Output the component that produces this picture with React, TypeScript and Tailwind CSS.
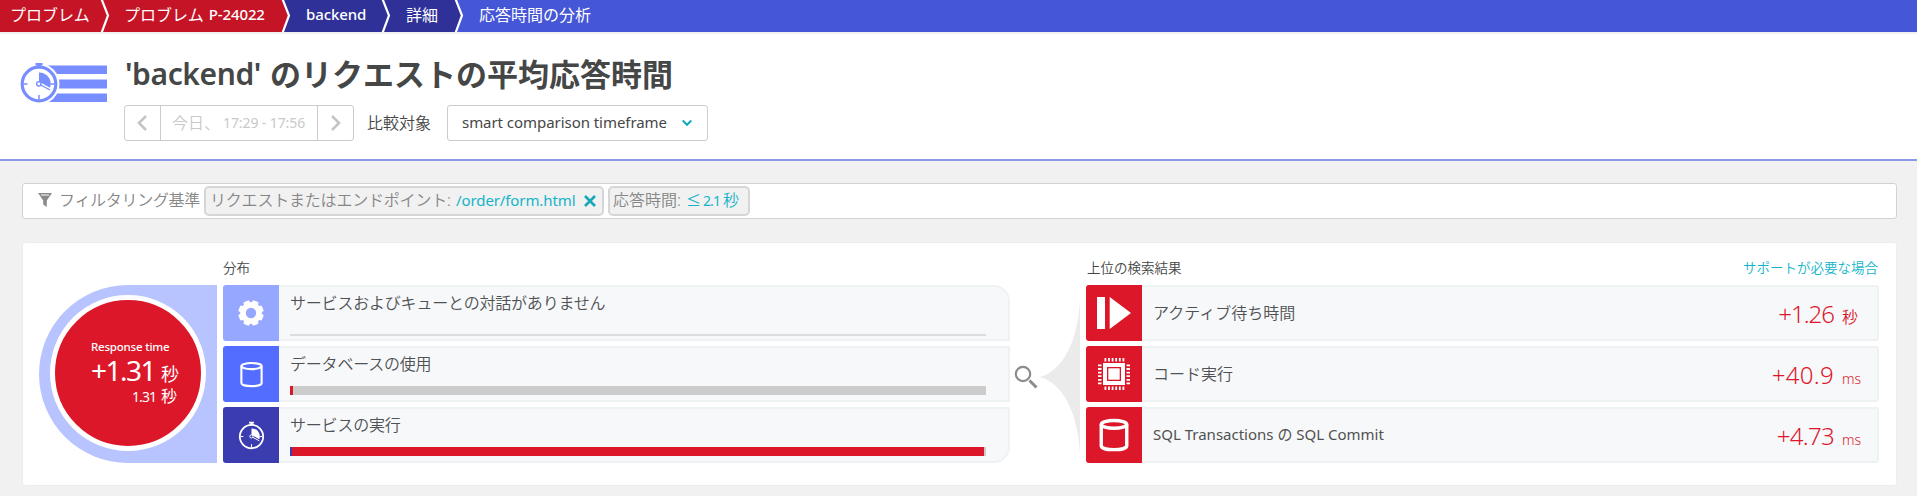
import React from "react";

const T = ({ t, c }: { t: string; c: string }) => <span className={`whitespace-pre leading-none ${c}`}>{t}</span>;

function Stopwatch({ color, hub, thin }: { color: string; hub: string; thin?: boolean }) {
  return (
    <>
      <circle cx="20" cy="22" r={thin ? 16.5 : 16.8} fill="none" stroke={color} strokeWidth={thin ? 2.6 : 3.2} />
      <path d="M16.5 1h7v2.500h-1.800V6h-3.400V3.500h-1.800z" fill={color} />
      <path d="M20 10.500a11.500 11.500 0 0 1 11 15.500L20 21z" fill={color} />
      <path d="M20.500 21.500l11 6.300" stroke={hub} strokeWidth="2.800" />
      <path d="M20 22l11 6" stroke={color} strokeWidth="1.400" />
      <circle cx="19.800" cy="21.800" r="2.200" fill={hub} stroke={color} strokeWidth="1.400" />
      <path d="M20 33v4M5 22h3.500M31.500 22H35" stroke={color} strokeWidth="1.500" />
    </>
  );
}

function HeaderIcon() {
  return (
    <svg width="88" height="42" viewBox="0 0 88 42">
      <path d="M20 3.500h67v8.500H20zM20 17.500h67v9H20zM20 31.500h67v8.500H20z" fill="#788dff" />
      <circle cx="19" cy="22" r="20.500" fill="#fff" />
      <g transform="translate(-1 0)">
        <Stopwatch color="#788dff" hub="#fff" />
      </g>
    </svg>
  );
}

function Crumb({ w, bg, next, children }: { w: string; bg: string; next?: string; children: React.ReactNode }) {
  return (
    <div className={`flex h-8 items-center ${w} ${bg}`}>
      <div className="flex flex-1 items-center pb-[3px]">{children}</div>
      {next && (
        <svg width="11" height="32" viewBox="0 0 11 32" className="shrink-0">
          <path d="M3 0l6 16-6 16h8V0z" fill={next} />
          <path d="M2.500 -1l6.500 16.500L2.500 33" fill="none" stroke="#fff" strokeWidth="2.200" />
        </svg>
      )}
    </div>
  );
}

function DbIcon({ size, sw }: { size: number; sw: number }) {
  return (
    <svg width={size} height={size} viewBox="0 0 32 32" fill="none" stroke="#fff" strokeWidth={sw}>
      <ellipse cx="16" cy="6" rx="12" ry="3.600" />
      <path d="M4 6v20c0 2.300 5.400 3.800 12 3.800s12-1.500 12-3.800V6" />
    </svg>
  );
}

function GearIcon() {
  return (
    <svg width="26" height="26" viewBox="-13 -13 26 26">
      {[0, 45, 90, 135, 180, 225, 270, 315].map((a) => (
        <path key={a} d="M-3.600 -8L-3 -12.500Q0 -13 3 -12.500L3.600 -8z" transform={`rotate(${a + 22.5})`} fill="#fff" />
      ))}
      <circle r="8" fill="none" stroke="#fff" strokeWidth="5.600" />
    </svg>
  );
}

function ChipIcon() {
  const p = [6.5, 10.1, 13.7, 17.3, 20.9, 24.5];
  return (
    <svg width="32" height="32" viewBox="0 0 32 32" fill="#fff">
      <path fillRule="evenodd" d="M5 5h22v22H5zM9 9v14h14V9z" />
      <path d="M10.300 10.300h11.400v11.400H10.300z" />
      {p.map((v) => (
        <g key={v}>
          <path d={`M${v} 0h1.800v3.500h-1.800zM${v} 28.500h1.800V32h-1.800z`} />
          <path d={`M0 ${v}v1.800h3.500v-1.800zM28.500 ${v}v1.800H32v-1.800z`} />
        </g>
      ))}
    </svg>
  );
}

function PlayIcon() {
  return (
    <svg width="34" height="32" viewBox="0 0 34 32" fill="#fff">
      <path d="M0 0h8v32H0zM12.700 0L34 16 12.700 32z" />
    </svg>
  );
}

function DistRow({ icon, bg, r, label, bar }: { icon: React.ReactNode; bg: string; r: string; label: string; bar: React.ReactNode }) {
  return (
    <div className="flex h-14">
      <div className={`flex w-14 items-center justify-center rounded-l-[3px] ${bg}`}>{icon}</div>
      <div className={`flex w-[731px] flex-col justify-between border-2 border-l-0 border-[#eff2f3] bg-[#f7f8fa] pr-[22px] pl-[11px] ${r}`}>
        <T t={label} c="pt-[8px] text-[16px] font-[350] tracking-[-0.2px] text-[#505151]" />
        {bar}
      </div>
    </div>
  );
}

function FindRow({ icon, children, value, vc, unit, uw }: { icon: React.ReactNode; children: React.ReactNode; value: string; vc: string; unit: string; uw: string }) {
  return (
    <div className="flex h-14">
      <div className="flex w-14 items-center justify-center rounded-l-[3px] bg-[#dc172a]">{icon}</div>
      <div className="flex flex-1 items-center justify-between rounded-r-[3px] border-2 border-l-0 border-[#eff2f3] bg-[#f7f8fa] pl-[11px]">
        <div className="flex items-baseline pb-px text-[16px] font-[350] text-[#505151]">{children}</div>
        <div className="flex items-baseline pt-1 text-[#dc172a]">
          <T t={value} c={`text-[24px] font-light ${vc}`} />
          <div className="w-[43px] pl-2">
            <T t={unit} c={uw} />
          </div>
        </div>
      </div>
    </div>
  );
}

export default function App() {
  return (
    <div className="flex h-[496px] w-[1917px] flex-col overflow-hidden bg-[#f1f1f1] font-['Noto_Sans','Noto_Sans_CJK_JP',sans-serif] text-[#454646]">
      <nav className="flex h-8 shrink-0 bg-[#4556d7] text-white shadow-[inset_0_1px_0_rgba(0,0,0,0.15)]">
        <Crumb w="w-[110px] pl-[10px]" bg="bg-[#c41425]" next="#c41425">
          <T t="プロブレム" c="text-[16px]" />
        </Crumb>
        <Crumb w="w-[181px] pl-[14px]" bg="bg-[#c41425]" next="#2f3199">
          <T t="プロブレム" c="text-[16px]" />
          <T t="P-24022" c="pl-[5px] text-[15px] font-medium tracking-[-0.1px]" />
        </Crumb>
        <Crumb w="w-[100px] pl-[15px]" bg="bg-[#2f3199]" next="#2f3199">
          <T t="backend" c="text-[15px] font-medium tracking-[-0.1px]" />
        </Crumb>
        <Crumb w="w-[73px] pl-[15px]" bg="bg-[#2f3199]" next="#4556d7">
          <T t="詳細" c="text-[16px]" />
        </Crumb>
        <Crumb w="flex-1 pl-[15px]" bg="bg-[#4556d7]">
          <T t="応答時間の分析" c="text-[16px]" />
        </Crumb>
      </nav>

      <header className="flex h-[129px] shrink-0 items-start border-t-2 border-b-2 border-t-[#f1f1f4] border-b-[#8b98e8] bg-white pt-[28px] pl-5">
        <HeaderIcon />
        <div className="flex flex-col pl-4">
          <h1 className="-mt-[4px] flex h-[32px] items-center font-bold">
            <T t="'backend'" c="w-[146px] pl-px text-[30px] font-semibold tracking-[-0.4px]" />
            <T t="のリクエストの平均応答時間" c="text-[31px]" />
          </h1>
          <div className="mt-[15px] flex h-9 items-center">
            <div className="flex h-9 w-[230px] rounded-[3px] border border-[#ccc] text-[#c9c9c9]">
              <div className="flex w-9 items-center justify-center border-r border-[#ccc] pr-[2px]">
                <svg width="12" height="16" viewBox="0 0 12 16" fill="none" stroke="#c5c5c5" strokeWidth="2.600"><path d="M10 1L3 8l7 7" /></svg>
              </div>
              <div className="flex flex-1 items-center pl-[11px]">
                <T t="今日、" c="w-[51px] text-[16px] font-[350]" />
                <T t="17:29 - 17:56" c="text-[14px] tracking-[-0.1px]" />
              </div>
              <div className="flex w-9 items-center justify-center border-l border-[#ccc]">
                <svg width="12" height="16" viewBox="0 0 12 16" fill="none" stroke="#c5c5c5" strokeWidth="2.600"><path d="M2 1l7 7-7 7" /></svg>
              </div>
            </div>
            <T t="比較対象" c="w-[93px] pb-px pl-[13px] text-[16px] font-[350]" />
            <div className="flex h-9 w-[261px] items-center justify-between rounded-[3px] border border-[#ccc] pr-[15px] pl-[14px]">
              <T t="smart comparison timeframe" c="pb-[2px] text-[15px] tracking-[-0.05px]" />
              <svg width="10" height="8" viewBox="0 0 10 8" fill="none" stroke="#14a8ba" strokeWidth="2"><path d="M.7 1.500L5 5.800l4.300-4.300" /></svg>
            </div>
          </div>
        </div>
      </header>

      <main className="flex flex-col pt-[22px] pr-[20px] pl-[22px]">
        <div className="flex h-9 items-center rounded-[3px] border border-[#d2d2d2] bg-white pl-[15px] text-[16px] font-[350] text-[#868686]">
          <svg width="14" height="14" viewBox="0 0 14 14" className="-mt-[3px] shrink-0"><path d="M0 0h14L8.800 7.500V14L5.200 11.500v-4z" fill="#8a8a8a" /><path d="M3 2h8" stroke="#fff" /></svg>
          <T t="フィルタリング基準" c="w-[152px] pb-[2px] pl-[7px] tracking-[-0.3px]" />
          <div className="flex h-[30px] w-[400px] items-center rounded-[5px] border-2 border-[#d6d6d6] bg-[#f1f1f1] pb-px pl-[4px]">
            <T t="リクエストまたはエンドポイント:" c="w-[246px] pb-px tracking-[-0.2px]" />
            <T t="/order/form.html" c="w-[128px] text-[15px] font-normal tracking-[-0.1px] text-[#14b4ca]" />
            <svg width="12" height="12" viewBox="0 0 12 12" stroke="#14a8ba" strokeWidth="2.600"><path d="M1 1l10 10M11 1L1 11" /></svg>
          </div>
          <div className="ml-[4px] flex h-[30px] w-[142px] items-center rounded-[5px] border-2 border-[#d6d6d6] bg-[#f1f1f1] pb-px pl-[3px]">
            <T t="応答時間:" c="w-[73px] pb-px" />
            <T t="≤" c="w-[17px] text-[15px] text-[#14b4ca]" />
            <T t="2.1" c="w-[20px] text-[14px] font-normal tracking-[-0.900px] text-[#14b4ca]" />
            <T t="秒" c="pb-px text-[#14b4ca]" />
          </div>
        </div>

        <section className="mt-[23px] flex h-[244px] rounded-[3px] border border-[#eaeeee] bg-white pl-4">
          <div className="mt-[42px] flex h-[178px] w-[178px] items-center rounded-l-full bg-[#b8c4ff] pb-[2px] pl-[11px]">
            <div className="flex h-[156px] w-[156px] flex-col rounded-full border-[5px] border-white bg-[#dc172a] pt-[41px] pl-[36px] text-white">
              <T t="Response time" c="text-[11.500px] font-medium tracking-[-0.2px]" />
              <div className="flex h-[31px] items-baseline pt-[3px]">
                <T t="+1.31" c="w-[70px] text-[28px] tracking-[-1.500px]" />
                <T t="秒" c="text-[18px]" />
              </div>
              <div className="flex items-baseline pt-1 pl-[41px]">
                <T t="1.31" c="w-[29px] text-[14px] tracking-[-0.900px]" />
                <T t="秒" c="text-[16px]" />
              </div>
            </div>
          </div>

          <div className="ml-[6px] flex w-[787px] flex-col pt-[19px]">
            <T t="分布" c="h-[23px] text-[13.500px] font-[350]" />
            <div className="flex flex-col gap-[5px]">
              <DistRow icon={<GearIcon />} bg="bg-[#96a7ff]" r="rounded-tr-[16px]" label="サービスおよびキューとの対話がありません" bar={<div className="mb-[3px] h-[2px] bg-[#dcdddf]" />} />
              <DistRow
                icon={<DbIcon size={27} sw={2.5} />} bg="bg-[#526dff]" r="" label="データベースの使用"
                bar={<div className="mb-[5px] h-[9px] bg-[#ccc]"><div className="h-full w-[3px] bg-[#dc172a]" /></div>}
              />
              <DistRow
                icon={<svg width="27" height="29" viewBox="1 0 38 41"><Stopwatch color="#fff" hub="#3a3cb0" thin /></svg>} bg="bg-[#3a3cb0]" r="rounded-br-[16px]" label="サービスの実行"
                bar={<div className="mb-[5px] flex h-[9px] bg-[#ccc]"><div className="w-[2px] bg-[#3a3cb0]" /><div className="w-[692px] bg-[#dc172a]" /></div>}
              />
            </div>
          </div>

          <div className="flex w-[76px] items-start pl-[4px]">
            <svg width="24" height="24" viewBox="0 0 24 24" fill="none" stroke="#8c8c8c" className="mt-[122px]">
              <circle cx="9" cy="9" r="7.200" strokeWidth="2.200" />
              <path d="M15.500 15.500l7 7" strokeWidth="3" />
            </svg>
            <svg width="40" height="156" viewBox="0 0 40 156" className="mt-[56px] ml-[2px]"><path d="M40 0C38 44 22 72 0 78c22 6 38 34 40 78z" fill="#ebebeb" /></svg>
          </div>

          <div className="flex w-[793px] flex-col pt-[19px]">
            <div className="flex h-[23px] justify-between pr-px pl-px font-[350]">
              <T t="上位の検索結果" c="text-[13.500px]" />
              <T t="サポートが必要な場合" c="text-[13.500px] text-[#14b4ca]" />
            </div>
            <div className="flex flex-col gap-[5px]">
              <FindRow icon={<PlayIcon />} value="+1.26" vc="tracking-[-1px]" unit="秒" uw="text-[16px] font-[350]">
                <T t="アクティブ待ち時間" c="" />
              </FindRow>
              <FindRow icon={<ChipIcon />} value="+40.9" vc="tracking-[0.3px]" unit="ms" uw="text-[14px] font-light">
                <T t="コード実行" c="" />
              </FindRow>
              <FindRow icon={<DbIcon size={34} sw={3.2} />} value="+4.73" vc="tracking-[-0.700px]" unit="ms" uw="text-[14px] font-light">
                <T t="SQL Transactions の SQL Commit" c="text-[15px] font-normal" />
              </FindRow>
            </div>
          </div>
        </section>
      </main>
    </div>
  );
}
